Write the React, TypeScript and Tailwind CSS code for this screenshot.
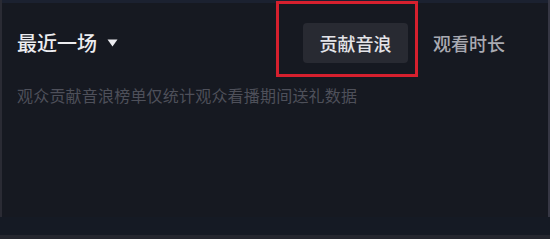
import React from "react";

export default function App() {
  return (
    <div
      className="relative w-[550px] h-[239px] overflow-hidden bg-[#161921]"
      style={{ fontFamily: '"Noto Sans CJK SC", "Noto Sans", sans-serif' }}
    >
      <div className="absolute inset-x-0 top-0 h-[3px] bg-[#1b2130]" />
      <div className="absolute inset-y-0 left-0 w-[2px] bg-[#2a2b34]" />
      <div className="absolute inset-y-0 right-0 w-[2px] bg-[#363744]" />
      <div className="absolute inset-x-0 bottom-0 h-[4px] bg-[#24262e]" />
      <div className="absolute inset-x-0 bottom-[4px] h-[18px] bg-[#151a24]" />

      <div className="flex flex-col pl-[17px] pr-[45px]">
        <div className="flex items-center justify-between pt-[23px] h-[63px]">
          <div className="flex items-center gap-[10px]">
            <span className="text-[20px] leading-[40px] font-medium text-[#ececf0]">最近一场</span>
            <svg width="11" height="8" viewBox="0 0 11 8">
              <path d="M0.5 0.5 L10.5 0.5 L5.5 7.5 Z" fill="#ececf0" />
            </svg>
          </div>
          <div className="flex items-center gap-[25px]">
            <div className="flex items-center justify-center w-[105px] h-[40px] rounded-[4px] bg-[#282a32] text-[18px] font-medium text-[#e4e4e8]">
              贡献音浪
            </div>
            <span className="text-[18px] font-medium text-[#a9aab2]">观看时长</span>
          </div>
        </div>
        <div className="mt-[22px] text-[16px] leading-[20px] tracking-[0.2px] text-[#4e505a]">
          观众贡献音浪榜单仅统计观众看播期间送礼数据
        </div>
      </div>

      <div className="absolute left-[276px] top-[1px] w-[142px] h-[76px] border-[3px] border-[#d6202e]" />
    </div>
  );
}
